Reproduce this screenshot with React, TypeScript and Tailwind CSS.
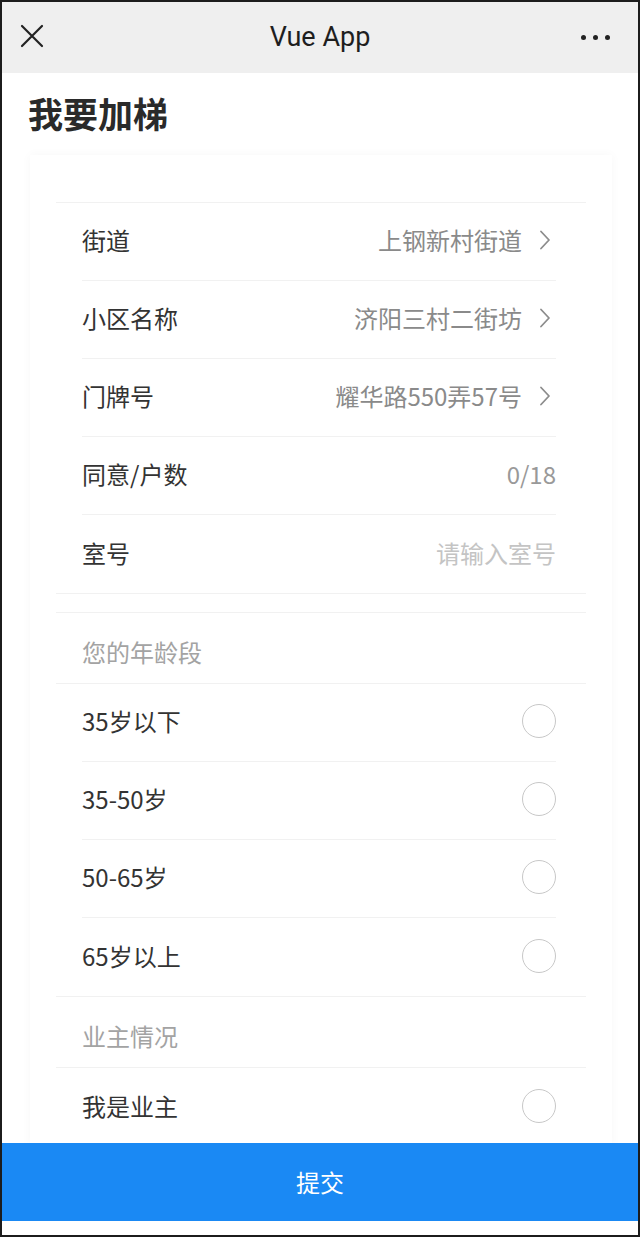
const FONT = "font-['Noto_Sans_CJK_SC','Noto_Sans',sans-serif]";

type Field = { label: string; value: string; kind: "link" | "text" | "placeholder" };

const FIELDS: Field[] = [
  { label: "街道", value: "上钢新村街道", kind: "link" },
  { label: "小区名称", value: "济阳三村二街坊", kind: "link" },
  { label: "门牌号", value: "耀华路550弄57号", kind: "link" },
  { label: "同意/户数", value: "0/18", kind: "text" },
  { label: "室号", value: "请输入室号", kind: "placeholder" },
];

const AGES = ["35岁以下", "35-50岁", "50-65岁", "65岁以上"];

function Chevron() {
  return (
    <svg width="20" height="20" viewBox="0 0 20 20" fill="none" className="shrink-0">
      <path d="M5 1.5 L13 10 L5 18.5" stroke="#8c8c8c" strokeWidth="1.8" strokeLinecap="round" strokeLinejoin="round" />
    </svg>
  );
}

function Radio() {
  return <span className="block h-[34px] w-[34px] rounded-full border-[1.5px] border-[#c8c8c8]" />;
}

function Row({ children, last }: { children: React.ReactNode; last?: boolean }) {
  return (
    <div
      className={`ml-[26px] mr-[30px] flex h-[78px] items-center justify-between pb-[3px] ${
        last ? "" : "border-b border-[#f1f1f1]"
      }`}
    >
      {children}
    </div>
  );
}

function SectionTitle({ children }: { children: React.ReactNode }) {
  return (
    <div className="flex h-[71px] items-center border-b border-[#f1f1f1] pl-[26px] pt-[7px] text-[24px] text-[#a3a3a3]">
      {children}
    </div>
  );
}

export default function App() {
  return (
    <div className={`flex h-[1237px] flex-col overflow-hidden border-2 border-[#1c1c1c] bg-white ${FONT}`}>
      {/* nav bar */}
      <div className="relative flex h-[71px] shrink-0 items-center justify-center bg-[#efefef]">
        <svg width="24" height="24" viewBox="0 0 24 24" className="absolute left-[18px] top-[22px]">
          <path d="M2 2 L22 22 M22 2 L2 22" stroke="#222" strokeWidth="2.2" strokeLinecap="round" />
        </svg>
        <span className="font-['Roboto','Liberation_Sans',sans-serif] text-[27px] text-[#1e1e1e]">Vue App</span>
        <div className="absolute right-[28px] top-[33px] flex gap-[7px]">
          <span className="h-[5px] w-[5px] rounded-full bg-[#222]" />
          <span className="h-[5px] w-[5px] rounded-full bg-[#222]" />
          <span className="h-[5px] w-[5px] rounded-full bg-[#222]" />
        </div>
      </div>

      <main className="flex-1 overflow-hidden">
        <h1 className="pl-[26px] pt-[20px] text-[35px] font-bold leading-[40px] text-[#2a2a2a]">我要加梯</h1>

        <div className="ml-[28px] mr-[26px] mt-[22px] px-[26px] pt-[47px] shadow-[0_0_10px_rgba(0,0,0,0.035)]">
          <div className="border-y border-[#f1f1f1]">
            {FIELDS.map((f, i) => (
              <Row key={f.label} last={i === FIELDS.length - 1}>
                <span className="text-[24px] text-[#333]">{f.label}</span>
                {f.kind === "link" ? (
                  <span className="flex items-center gap-[14px]">
                    <span className="text-[24px] text-[#8a8a8a]">{f.value}</span>
                    <Chevron />
                  </span>
                ) : (
                  <span className={`text-[24px] ${f.kind === "text" ? "text-[#999]" : "text-[#c4c4c4]"}`}>
                    {f.value}
                  </span>
                )}
              </Row>
            ))}
          </div>

          <div className="mt-[18px] border-t border-[#f1f1f1]">
            <SectionTitle>您的年龄段</SectionTitle>
            {AGES.map((a, i) => (
              <Row key={a} last={i === AGES.length - 1}>
                <span className="text-[24px] text-[#333]">{a}</span>
                <Radio />
              </Row>
            ))}
          </div>

          <div className="border-t border-[#f1f1f1]">
            <SectionTitle>业主情况</SectionTitle>
            <Row last>
              <span className="text-[24px] text-[#333]">我是业主</span>
              <Radio />
            </Row>
          </div>
        </div>
      </main>

      <button className="flex h-[78px] shrink-0 items-center justify-center bg-[#1a89f4] text-[24px] text-white">
        提交
      </button>
      <div className="h-[14px] shrink-0 bg-white" />
    </div>
  );
}
